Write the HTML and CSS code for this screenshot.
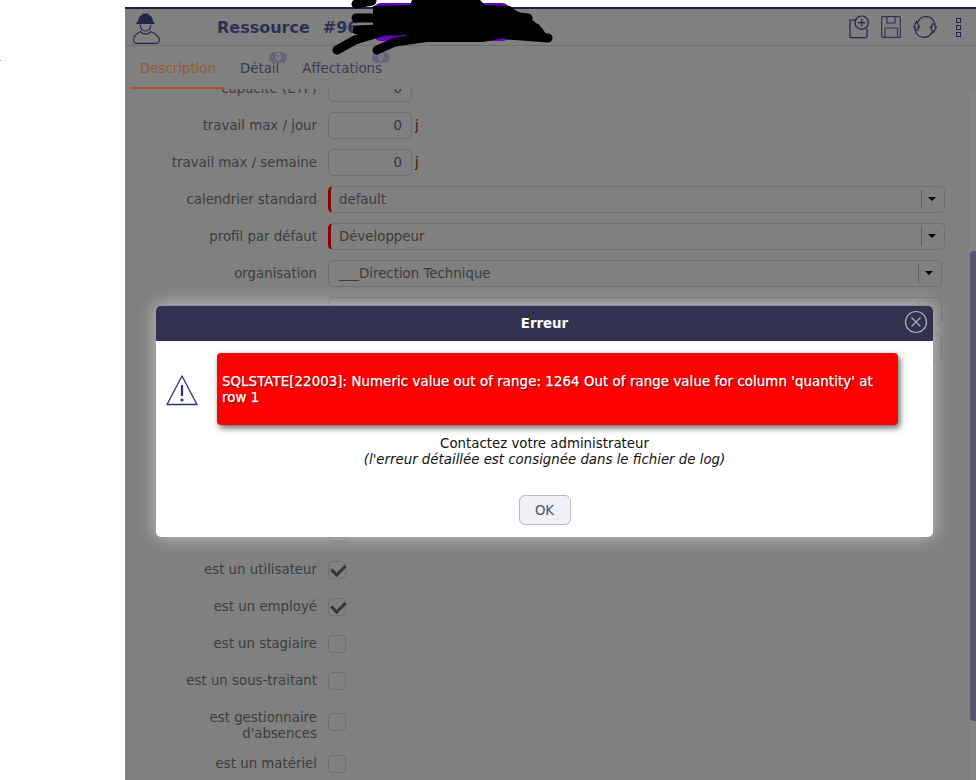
FILE: index.html
```html
<!DOCTYPE html>
<html lang="fr">
<head>
<meta charset="utf-8">
<title>Ressource</title>
<link rel="stylesheet" href="styles.css">
</head>
<body>
<div class="page">
  <div class="gutter"><span class="speck"></span></div>
  <main class="panel">
    <header class="head">
      <svg class="worker" width="27" height="31" viewBox="0 0 27 31" fill="none" stroke="#232348" stroke-width="1.1">
        <path d="M5 9 C5 5 7 2.500 9.500 1.800 V.5 H15.500 V1.800 C18 2.500 20 5 20 9 H21.500 V11 H3.500 V9 Z" fill="#232348" stroke="none"/>
        <path d="M7 11.500 C7.500 15.500 9.500 18 12.500 18 C15.500 18 17.500 15.500 18 11.500"/>
        <path d="M7.500 18.500 C3.500 20.500 .6 23 .6 27 C.6 29.500 2 30.400 4 30.400 H23 C25 30.400 26.400 29.500 26.400 27 C26.400 23 22 20.500 17.500 18.500 C16 22 9.500 22 7.500 18.500 Z"/>
      </svg>
      <h1 class="title"><span>Ressource</span><span>#96</span></h1>
      <div class="tools">
        <svg width="20" height="24" viewBox="0 0 20 24" fill="none" stroke="#232348" stroke-width="1.2">
          <path d="M6 5 H2 Q1 5 1 6 V22 Q1 22.700 2 22.700 H16.500 Q18 22.700 18 21 V13.500"/>
          <circle cx="12.700" cy="7.700" r="6.700"/>
          <path d="M12.700 4 V11.400 M9 7.700 H16.400"/>
        </svg>
        <svg width="20" height="22" viewBox="0 0 20 22" fill="none" stroke="#34345a" stroke-width="1.2">
          <rect x=".6" y=".6" width="18.800" height="20.800" rx="1"/>
          <path d="M6 .6 V7 H14 V.6 M4 21.400 V12 H16.500 V21.400"/>
        </svg>
        <svg width="24" height="24" viewBox="0 0 24 24" fill="none" stroke="#232348" stroke-width="1.200">
          <path d="M4.500 8 C6 3.500 10 1.500 13.500 1.700 C18 2 21 5 21.500 9.500"/>
          <path d="M19.500 16 C18 20.500 14 22.500 10.500 22.300 C6 22 3 19 2.500 14.500"/>
          <path d="M.6 12 L3.500 6.500 L6.500 12 H5 V15 H2 V12 Z M23.400 12 L20.500 17.500 L17.500 12 H19 V9 H22 V12 Z"/>
        </svg>
        <div class="dots"><i></i><i></i><i></i></div>
      </div>
    </header>
    <nav class="tabs">
      <a class="tab active">Description</a>
      <a class="tab">Détail<b class="badge">0</b></a>
      <a class="tab">Affectations<b class="badge">0</b></a>
    </nav>
    <div class="scroller">
      <form class="form">
        <div class="row"><label>capacité (ETP)</label><span class="num">0</span></div>
        <div class="row"><label>travail max / jour</label><span class="num">0</span><span class="unit">j</span></div>
        <div class="row"><label>travail max / semaine</label><span class="num">0</span><span class="unit">j</span></div>
        <div class="row"><label>calendrier standard</label><div class="sel req"><span>default</span><em></em></div></div>
        <div class="row"><label>profil par défaut</label><div class="sel req"><span>Développeur</span><em></em></div></div>
        <div class="row"><label>organisation</label><div class="sel short"><span>___Direction Technique</span><em></em></div></div>
        <div class="row"><label></label><div class="sel short"><span></span><em></em></div></div>
        <div class="row"><label></label><div class="sel short"><span></span><em></em></div></div>
        <div class="row"></div>
        <div class="row"></div>
        <div class="row"></div>
        <div class="row"></div>
        <div class="row"><label></label><span class="chk"></span></div>
        <div class="row"><label>est un utilisateur</label><span class="chk on"></span></div>
        <div class="row"><label>est un employé</label><span class="chk on"></span></div>
        <div class="row"><label>est un stagiaire</label><span class="chk"></span></div>
        <div class="row"><label>est un sous-traitant</label><span class="chk"></span></div>
        <div class="row tall"><label>est gestionnaire d'absences</label><span class="chk"></span></div>
        <div class="row"><label>est un matériel</label><span class="chk"></span></div>
      </form>
      <div class="scrollbar"><div class="thumb"></div></div>
    </div>
  </main>
</div>

<section class="dialog">
  <div class="dlg-head">
    <span>Erreur</span>
    <svg class="close" width="24" height="24" viewBox="0 0 24 24" fill="none" stroke="#aeaeba" stroke-width="1.200">
      <circle cx="12" cy="12" r="10.500"/>
      <path d="M7.500 7.500 L16.500 16.500 M16.500 7.500 L7.500 16.500"/>
    </svg>
  </div>
  <div class="dlg-body">
    <div class="dlg-main">
      <svg class="warn" width="32" height="32" viewBox="0 0 32 32" fill="none" stroke="#2e2e7e" stroke-width="1.300">
        <path d="M16 2 L31 30.500 H1 Z" stroke-linejoin="round"/>
        <path d="M16 11 V22" stroke-width="2.200"/>
        <circle cx="16" cy="26" r="1.600" fill="#2e2e7e" stroke="none"/>
      </svg>
      <div class="alert">SQLSTATE[22003]: Numeric value out of range: 1264 Out of range value for column 'quantity' at row 1</div>
    </div>
    <p class="contact">Contactez votre administrateur<br><i>(l'erreur détaillée est consignée dans le fichier de log)</i></p>
    <div class="actions"><button class="ok" type="button">OK</button></div>
  </div>
</section>

<svg class="scribble" width="240" height="56" viewBox="0 0 240 56" fill="none">
  <rect x="53" y="3" width="137" height="38" rx="8" fill="#6a00c8"/>
  <path d="M53 6 L90 5 L92 0 H160 L165 5 L190 6 L195 10 L210 18 L222 28 L228 37 L190 37 L163 42 H90 L87 35 L53 33 Z" fill="#000"/>
  <g stroke="#000" stroke-width="9" stroke-linecap="round" stroke-linejoin="round">
    <path d="M36 4 L52 1"/>
    <path d="M36 18 H80"/>
    <path d="M37 30 L80 28"/>
    <path d="M17 50 L35 40 L65 31 H80"/>
    <path d="M57 50 L75 42 L110 37 L160 36"/>
    <path d="M228 38 L187 35"/>
    <path d="M216 28 L180 25"/>
    <path d="M208 18 L180 15"/>
  </g>
</svg>
</body>
</html>
```

FILE: styles.css
```css
* { box-sizing: border-box; }
html, body { margin: 0; height: 780px; overflow: hidden; background: #fff; }
body { font-family: "DejaVu Sans", sans-serif; font-size: 13.33px; color: #3c3c3c; }

.page { display: flex; height: 780px; padding-top: 7px; }
.gutter { width: 125px; flex: none; padding-top: 53px; }
.speck { display: block; width: 1px; height: 1px; background: #999; }

.panel { flex: 1; display: flex; flex-direction: column; min-width: 0; background: #808080; border-top: 2px solid #20203a; }

.head { height: 37px; flex: none; display: flex; align-items: center; border-bottom: 1px solid #6f6f6f; padding-left: 8px; position: relative; }
.worker { flex: none; margin-top: 3px; }
.title { margin: 0 0 0 57px; font-size: 16px; font-weight: 700; color: #2f2f55; display: flex; gap: 13px; }

.tools { margin-left: auto; display: flex; align-items: center; gap: 12px; padding-right: 15px; }
.dots { display: flex; flex-direction: column; gap: 2px; margin-left: 7px; }
.dots i { display: block; width: 5px; height: 5px; border: 1px solid #232348; }

.tabs { height: 43px; flex: none; display: flex; padding-left: 5px; align-items: stretch; }
.tab { position: relative; padding: 15px 11px 0; color: #3a3a50; line-height: 16px; margin-right: 2px; }
.tab.active { color: #9a5a30; padding: 15px 10px 0; width: 95px; border-bottom: 2px solid #a2552a; margin-right: 5px; }
.tab + .tab { padding: 15px 11px 0 10px; }
.badge { position: absolute; right: 3px; top: 6px; width: 18px; height: 11px; border-radius: 6px; background: #666678; color: #9a9aa6; font-size: 8px; font-weight: 400; line-height: 11px; text-align: center; }

.scroller { flex: 1; min-height: 0; overflow: hidden; position: relative; }
.form { margin-top: -19px; }
.row { height: 37px; display: flex; align-items: center; }
.row.tall { height: 46px; }
.row.tall label { padding-top: 8px; }
.row label { width: 192px; flex: none; margin-right: 11px; text-align: right; line-height: 16px; color: #3d3d3d; padding-left: 40px; }

.num { width: 84px; height: 27px; border: 1px solid #6f6f6f; border-radius: 5px; text-align: right; padding-right: 9px; line-height: 25px; color: #35354a; }
.unit { margin-left: 3px; color: #301418; font-weight: 400; }

.sel { width: 617px; height: 27px; border: 1px solid #6f6f6f; border-radius: 5px; display: flex; align-items: center; padding-left: 10px; position: relative; }
.sel.short { width: 614px; }
.sel span { flex: 1; }
.sel.req { border-left: 3px solid #8e0000; padding-left: 8px; }
.sel em { width: 23px; height: 19px; border-left: 1px solid #5e5e5e; position: relative; flex: none; }
.sel em::after { content: ""; position: absolute; left: 6px; top: 7px; border: 4px solid transparent; border-top: 4px solid #000; border-bottom: 0; }

.chk { width: 18px; height: 18px; border: 1px solid #6f6f6f; border-radius: 4px; position: relative; }
.chk.on::after { content: ""; position: absolute; left: 1px; top: 1px; width: 11px; height: 6px; border-left: 3px solid #333; border-bottom: 3px solid #333; transform: rotate(-45deg) translate(0, 2px); }

.scrollbar { position: absolute; right: 0; top: 3px; bottom: 0; width: 6px; background: #848484; border-radius: 4px 0 0 0; }
.thumb { position: absolute; top: 159px; left: 0; right: 0; height: 470px; background: #55546a; border-radius: 4px 0 0 4px; }

.dialog { position: absolute; left: 156px; top: 305px; width: 777px; height: 232px; background: #fff; border-radius: 5px; overflow: visible; box-shadow: 0 0 18px rgba(255,255,255,.55); display: flex; flex-direction: column; }
.dlg-head { height: 36px; flex: none; background: #323250; color: #fff; font-weight: 700; display: flex; align-items: center; justify-content: center; position: relative; border-radius: 5px 5px 0 0; box-shadow: inset 0 1px 0 rgba(255,255,255,.45); }
.close { position: absolute; right: 5px; top: 5px; }
.dlg-body { flex: 1; display: flex; flex-direction: column; }
.dlg-main { display: flex; padding: 12px 35px 0 10px; align-items: flex-start; }
.warn { flex: none; margin: 21px 19px 0 0; }
.alert { flex: 1; height: 72px; background: #f00; color: #fff; border-radius: 4px; padding: 21px 5px 0; line-height: 16px; letter-spacing: .08px; -webkit-text-stroke: .25px #fff; text-shadow: 1px 1px 1px rgba(70,0,0,.8); box-shadow: 2px 3px 6px rgba(0,0,0,.6); }
.contact { margin: 11px 0 0; text-align: center; line-height: 16px; color: #111; }
.actions { display: flex; justify-content: center; margin-top: 27px; }
.ok { width: 52px; height: 30px; background: #f0f0f6; border: 1px solid #bbb; border-radius: 6px; font: 13.33px "DejaVu Sans", sans-serif; color: #4a5568; padding: 0; }

.scribble { position: absolute; left: 320px; top: 0; }
```
